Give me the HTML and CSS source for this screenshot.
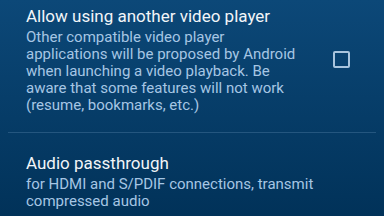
FILE: index.html
```html
<!DOCTYPE html>
<html lang="en">
<head>
    <meta charset="UTF-8">
    <meta name="viewport" content="width=device-width, initial-scale=1.0">
    <title>Video settings</title>
    <link rel="stylesheet" href="styles.css">
</head>
<body>
    <div class="prefs">
        <div class="pref pref-check">
            <div class="pref-text">
                <div class="pref-title">Allow using another video player</div>
                <div class="pref-summary">Other compatible video player applications will be proposed by Android when launching a video playback. Be aware that some features will not work (resume, bookmarks, etc.)</div>
            </div>
            <div class="checkbox"></div>
        </div>
        <div class="divider"></div>
        <div class="pref">
            <div class="pref-text">
                <div class="pref-title">Audio passthrough</div>
                <div class="pref-summary">for HDMI and S/PDIF connections, transmit compressed audio</div>
            </div>
        </div>
    </div>
</body>
</html>
```

FILE: styles.css
```css
html, body {
    margin: 0;
    padding: 0;
    height: 100%;
}

body {
    font-family: Roboto, "Noto Sans", sans-serif;
    background: linear-gradient(to bottom, #0c4878, #013259);
    overflow: hidden;
}

.prefs {
    padding: 0 8px;
}

.pref {
    display: flex;
    align-items: center;
    gap: 27px;
    padding-left: 18px;
}

.pref-check {
    padding-top: 5.5px;
}

.pref-text {
    flex: 1;
}

.pref-title {
    color: #f2f5f8;
    font-size: 17px;
    line-height: 20px;
}

.pref-summary {
    color: #a6c6e4;
    font-size: 15px;
    line-height: 17px;
    margin-top: 3.3px;
}

.checkbox {
    width: 13px;
    height: 13px;
    border: 2px solid #a9c5de;
    border-radius: 2px;
    margin-right: 26px;
}

.divider {
    height: 1px;
    background: #24567f;
    margin: 18.6px 0 19.8px;
}
```
